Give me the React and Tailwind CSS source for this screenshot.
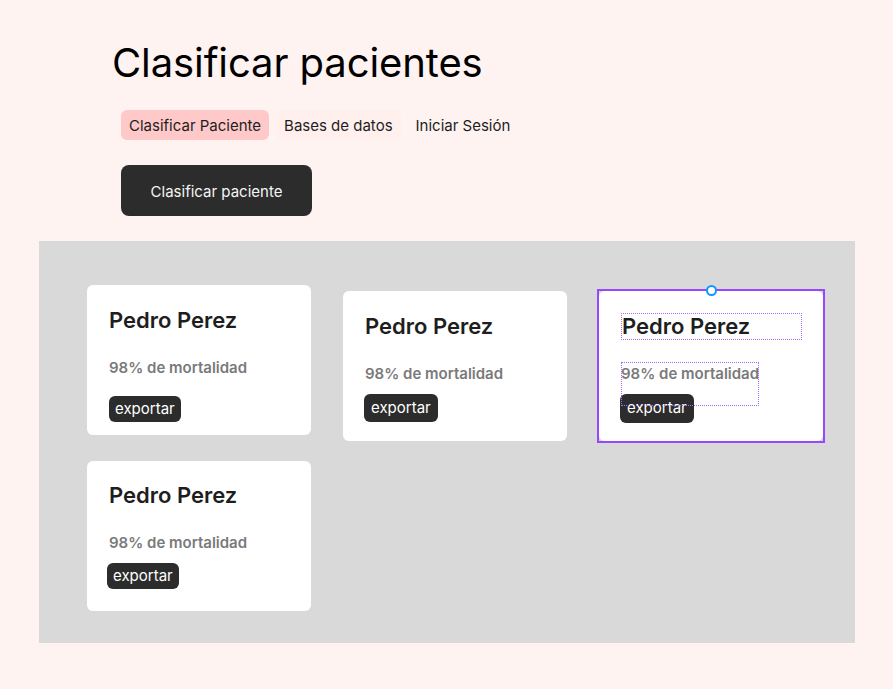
import React from "react";

function Card({ wrap, titleCls, subCls, btnCls }) {
  return (
    <div className={"w-[224px] h-[150px] bg-white rounded-[6px] flex flex-col items-start " + wrap}>
      <div className={"text-[22px] leading-[26px] font-semibold text-[#1e1e1e] " + titleCls}>
        Pedro Perez
      </div>
      <div className={"text-[15px] leading-[18px] font-semibold text-[#7a7a7a] " + subCls}>
        98% de mortalidad
      </div>
      <div className={"bg-[#2c2c2c] text-white text-[15px] rounded-[6px] flex items-center " + btnCls}>
        exportar
      </div>
    </div>
  );
}

export default function App() {
  return (
    <div
      className="min-h-[689px] w-[893px] bg-[#fff3f1] flex flex-col items-start"
      style={{ fontFamily: "Inter, 'Noto Sans', sans-serif" }}
    >
      <h1 className="pl-[112px] pt-[39px] text-[40px] leading-[48px] font-normal text-black tracking-[-0.1px]">
        Clasificar pacientes
      </h1>
      <nav className="mt-[23px] ml-[121px] flex items-center gap-[7px] text-[15px] text-[#1e1e1e]">
        <span className="h-[30px] px-[8px] pt-[2px] flex items-center rounded-[6px] bg-[#ffc9c9]">Clasificar Paciente</span>
        <span className="h-[30px] px-[8px] pt-[2px] flex items-center rounded-[6px] bg-[#ffefed]">Bases de datos</span>
        <span className="h-[30px] px-[8px] pt-[2px] flex items-center rounded-[6px]">Iniciar Sesión</span>
      </nav>
      <button className="mt-[25px] ml-[121px] w-[191px] h-[51px] pt-[3px] rounded-[8px] bg-[#2c2c2c] text-[#f5f5f5] text-[15px] flex items-center justify-center">
        Clasificar paciente
      </button>
      <section className="mt-[25px] ml-[39px] w-[816px] h-[402px] bg-[#d9d9d9] pl-[48px] pt-[44px] flex flex-col">
        <div className="flex items-start gap-[32px]">
          <Card
            wrap=""
            titleCls="mt-[22px] ml-[22px]"
            subCls="mt-[26px] ml-[22px]"
            btnCls="mt-[19px] ml-[22px] h-[26px] px-[6px]"
          />
          <Card
            wrap="mt-[6px]"
            titleCls="mt-[22px] ml-[22px]"
            subCls="mt-[26px] ml-[22px]"
            btnCls="mt-[11px] ml-[21px] h-[28px] px-[7px]"
          />
          <div className="relative mt-[6px]">
            <Card
              wrap=""
              titleCls="mt-[22px] ml-[23px]"
              subCls="mt-[26px] ml-[22px]"
              btnCls="mt-[11px] ml-[21px] h-[29px] px-[7px]"
            />
            <div className="absolute -inset-[2px] border-2 border-[#9747ff] pointer-events-none"></div>
            <div className="absolute left-[22px] top-[22px] w-[181px] h-[27px] border border-dotted border-[#a56cff] pointer-events-none"></div>
            <div className="absolute left-[22px] top-[71px] w-[138px] h-[44px] border border-dotted border-[#a56cff] pointer-events-none"></div>
            <div className="absolute left-[107px] -top-[6px] w-[11px] h-[11px] rounded-full bg-white border-2 border-[#0d99ff]"></div>
          </div>
        </div>
        <div className="mt-[20px] flex">
          <Card
            wrap=""
            titleCls="mt-[21px] ml-[22px]"
            subCls="mt-[26px] ml-[22px]"
            btnCls="mt-[11px] ml-[20px] h-[26px] px-[6px]"
          />
        </div>
      </section>
    </div>
  );
}
